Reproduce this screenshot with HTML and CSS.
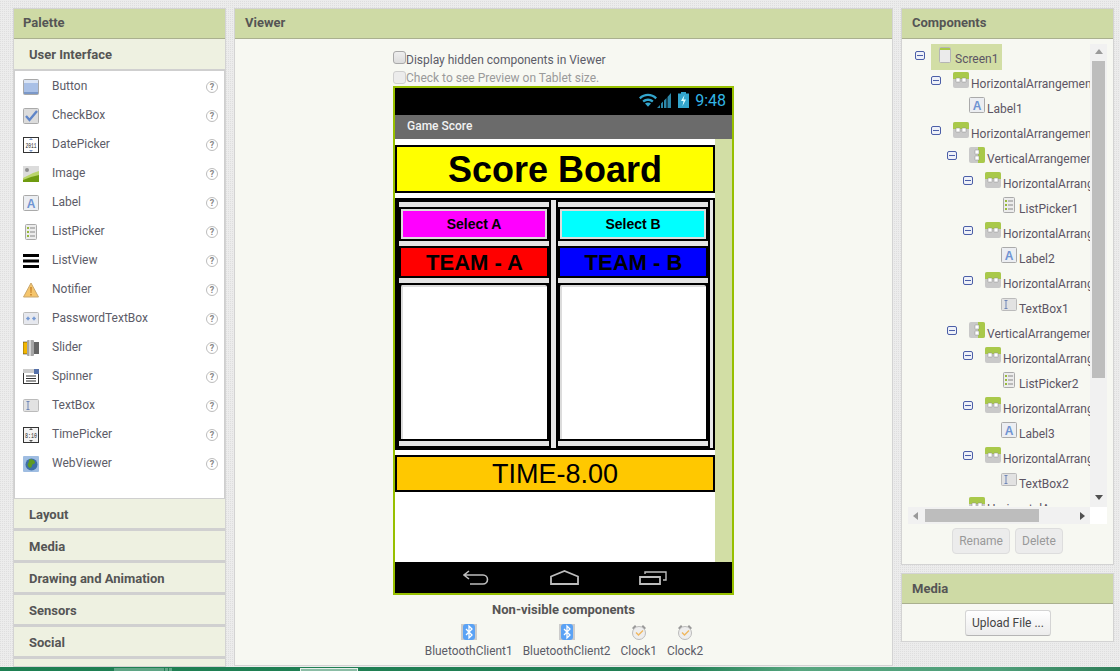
FILE: index.html
```html
<!DOCTYPE html>
<html lang="en">
<head>
<meta charset="utf-8">
<title>Game Score - Designer</title>
<link rel="stylesheet" href="styles.css">
</head>
<body>
<svg class="defs" width="0" height="0" aria-hidden="true">
  <defs>
    <symbol id="i-button" viewBox="0 0 16 16"><rect x=".5" y=".5" width="15" height="15" rx="1" fill="#a9c0e6" stroke="#a8a8a8"/><path d="M1 1h14v3H1z" fill="#dbe5f5"/><path d="M1 13h14v2H1z" fill="#7b98c8"/></symbol>
    <symbol id="i-check" viewBox="0 0 16 16"><rect x=".5" y=".5" width="15" height="15" rx="1" fill="#dcdcdc" stroke="#aaa"/><path d="M3 8l3.5 4L14 3" fill="none" stroke="#5f85c8" stroke-width="2.4"/></symbol>
    <symbol id="i-date" viewBox="0 0 16 16"><rect x=".5" y=".5" width="15" height="15" fill="#fff" stroke="#333"/><path d="M8 1l2 2H6zM8 15l2-2H6z" fill="#7b98c8"/><text x="8" y="11" font-size="8" textLength="11" lengthAdjust="spacingAndGlyphs" font-family="Liberation Mono" text-anchor="middle" fill="#222">2011</text></symbol>
    <symbol id="i-image" viewBox="0 0 16 16"><rect width="16" height="16" fill="#dcdcdc"/><circle cx="4" cy="4" r="2" fill="#8f8f8f"/><path d="M0 12L10 7l6-2v11H0z" fill="#b9d46a"/><path d="M0 14l8-3 8-2v7H0z" fill="#6f9b10"/></symbol>
    <symbol id="i-label" viewBox="0 0 16 16"><rect x=".5" y=".5" width="15" height="15" rx="1" fill="#eceef2" stroke="#aaa"/><text x="8" y="13" font-size="12" font-weight="700" font-family="Liberation Sans" text-anchor="middle" fill="#6f94d2">A</text></symbol>
    <symbol id="i-list" viewBox="0 0 16 16"><rect x="2.500" y=".5" width="11" height="15" rx="1" fill="#ececec" stroke="#aaa"/><path d="M4 3h2v2H4zM4 7h2v2H4zM4 11h2v2H4z" fill="#97b93c"/><path d="M7 4h5M7 8h5M7 12h5" stroke="#888"/></symbol>
    <symbol id="i-listview" viewBox="0 0 16 16"><path d="M0 1h16v3H0zM0 6.500h16v3H0zM0 12h16v3H0z" fill="#000"/></symbol>
    <symbol id="i-notifier" viewBox="0 0 16 16"><path d="M8 1l7.500 14H.5z" fill="#f5c56c" stroke="#c9a76e"/><path d="M7.200 5h1.600l-.3 6h-1zM7.200 12h1.600v1.500H7.200z" fill="#c9832b"/></symbol>
    <symbol id="i-pass" viewBox="0 0 16 16"><rect x=".5" y="1.500" width="15" height="12" rx="1" fill="#e6e8ee" stroke="#bbb"/><path d="M3 7.500h4M5 5.500v4M4 6l2 3M6 6L4 9M9 7.500h4M11 5.500v4M10 6l2 3M12 6l-2 3" stroke="#6f94d2" stroke-width=".8"/></symbol>
    <symbol id="i-slider" viewBox="0 0 16 16"><rect y="2" width="6" height="12" fill="#f2b600" stroke="#222" stroke-width=".5"/><rect x="10" y="2" width="6" height="12" fill="#666"/><rect x="4" y="0" width="7" height="16" rx="1" fill="#a6a6a6"/><path d="M6 0h2v16H6z" fill="#d4d4d4"/></symbol>
    <symbol id="i-spinner" viewBox="0 0 16 16"><rect x=".5" y=".5" width="15" height="14" fill="#fff" stroke="#333"/><path d="M0 0h16v4H0z" fill="#ccc"/><rect x="11" y="0" width="5" height="5" fill="#5570a8"/><path d="M3 7h10M3 9.500h10M3 12h10" stroke="#333"/></symbol>
    <symbol id="i-textbox" viewBox="0 0 16 16"><rect x=".5" y="1.500" width="15" height="12" rx="1" fill="#e2e2e2" stroke="#bbb"/><path d="M3.500 3.500h3M3.500 11.500h3M5 3.500v8" stroke="#6f86b8" fill="none"/></symbol>
    <symbol id="i-time" viewBox="0 0 16 16"><rect x=".5" y=".5" width="15" height="15" fill="#f4f4f4" stroke="#333"/><path d="M8 1l2 2H6zM8 15l2-2H6z" fill="#555"/><text x="8" y="11" font-size="8" textLength="12" lengthAdjust="spacingAndGlyphs" font-family="Liberation Mono" text-anchor="middle" fill="#222">8:10</text></symbol>
    <symbol id="i-web" viewBox="0 0 16 16"><rect width="16" height="16" rx="1" fill="#9fbde2"/><circle cx="8.500" cy="8.500" r="6" fill="#3d6ea8"/><path d="M6 3.500c3-1 6 1 6 3s-3 1-3 3-2 3-3 2-2-3-1-4 1-3 1-4z" fill="#5d9a22"/></symbol>
    <symbol id="i-ha" viewBox="0 0 16 16"><rect width="16" height="16" rx="2" fill="#c9c9c9"/><path d="M0 7V2a2 2 0 0 1 2-2h12a2 2 0 0 1 2 2v5z" fill="#a9c94a"/><rect x="3" y="6" width="4" height="4" rx=".5" fill="#fff" stroke="#888" stroke-width=".5"/><rect x="9" y="6" width="4" height="4" rx=".5" fill="#fff" stroke="#888" stroke-width=".5"/></symbol>
    <symbol id="i-va" viewBox="0 0 16 16"><rect width="16" height="16" rx="2" fill="#c9c9c9"/><path d="M9 0h5a2 2 0 0 1 2 2v12a2 2 0 0 1-2 2H9z" fill="#a9c94a"/><rect x="6" y="3" width="4" height="4" rx=".5" fill="#fff" stroke="#888" stroke-width=".5"/><rect x="6" y="9" width="4" height="4" rx=".5" fill="#fff" stroke="#888" stroke-width=".5"/></symbol>
    <symbol id="i-screen" viewBox="0 0 16 16"><rect x="2.500" y=".5" width="11" height="15" rx="1" fill="#ebebeb" stroke="#b5b5b5"/><path d="M3 1h10v2H3z" fill="#a9c94a"/></symbol>
    <symbol id="i-bt" viewBox="0 0 16 16"><rect width="16" height="16" fill="#ccc"/><rect x="2" width="12" height="16" rx="3" fill="#5aa2f5"/><path d="M5 5l6 6-3 3V2l3 3-6 6" fill="none" stroke="#fff" stroke-width="1.300"/></symbol>
    <symbol id="i-clock" viewBox="0 0 16 16"><path d="M1 4l3-3 1.500 1.500-3 3zM15 4l-3-3-1.500 1.500 3 3z" fill="#999"/><circle cx="8" cy="9" r="6.500" fill="#eee" stroke="#bbb"/><path d="M5 8.500l2.500 2.500L12 6.500" fill="none" stroke="#f0b860" stroke-width="1.400"/></symbol>
  </defs>
</svg>

<main class="workspace">
  <section class="panel palette">
    <h2 class="panel-head">Palette</h2>
    <h3 class="drawer open">User Interface</h3>
    <ul class="palette-list">
      <li class="pal-row"><svg class="ic"><use href="#i-button"/></svg><span class="pal-name">Button</span><span class="help">?</span></li>
      <li class="pal-row"><svg class="ic"><use href="#i-check"/></svg><span class="pal-name">CheckBox</span><span class="help">?</span></li>
      <li class="pal-row"><svg class="ic"><use href="#i-date"/></svg><span class="pal-name">DatePicker</span><span class="help">?</span></li>
      <li class="pal-row"><svg class="ic"><use href="#i-image"/></svg><span class="pal-name">Image</span><span class="help">?</span></li>
      <li class="pal-row"><svg class="ic"><use href="#i-label"/></svg><span class="pal-name">Label</span><span class="help">?</span></li>
      <li class="pal-row"><svg class="ic"><use href="#i-list"/></svg><span class="pal-name">ListPicker</span><span class="help">?</span></li>
      <li class="pal-row"><svg class="ic"><use href="#i-listview"/></svg><span class="pal-name">ListView</span><span class="help">?</span></li>
      <li class="pal-row"><svg class="ic"><use href="#i-notifier"/></svg><span class="pal-name">Notifier</span><span class="help">?</span></li>
      <li class="pal-row"><svg class="ic"><use href="#i-pass"/></svg><span class="pal-name">PasswordTextBox</span><span class="help">?</span></li>
      <li class="pal-row"><svg class="ic"><use href="#i-slider"/></svg><span class="pal-name">Slider</span><span class="help">?</span></li>
      <li class="pal-row"><svg class="ic"><use href="#i-spinner"/></svg><span class="pal-name">Spinner</span><span class="help">?</span></li>
      <li class="pal-row"><svg class="ic"><use href="#i-textbox"/></svg><span class="pal-name">TextBox</span><span class="help">?</span></li>
      <li class="pal-row"><svg class="ic"><use href="#i-time"/></svg><span class="pal-name">TimePicker</span><span class="help">?</span></li>
      <li class="pal-row"><svg class="ic"><use href="#i-web"/></svg><span class="pal-name">WebViewer</span><span class="help">?</span></li>
    </ul>
    <h3 class="drawer">Layout</h3>
    <h3 class="drawer">Media</h3>
    <h3 class="drawer">Drawing and Animation</h3>
    <h3 class="drawer">Sensors</h3>
    <h3 class="drawer">Social</h3>
    <h3 class="drawer"></h3>
  </section>

  <section class="panel viewer">
    <h2 class="panel-head">Viewer</h2>
    <div class="viewer-body">
      <label class="opt opt-first"><input class="box" type="checkbox">Display hidden components in Viewer</label>
      <label class="opt opt-off"><input class="box" type="checkbox" disabled>Check to see Preview on Tablet size.</label>
      <div class="phone">
        <div class="status">
          <svg class="st-wifi" viewBox="0 0 18 14"><path d="M0 4.500C5-.5 13-.5 18 4.500l-1.600 1.700C12 2 6 2 1.600 6.200z" fill="#33a5cc"/><path d="M3.400 7.800c3.200-3 8-3 11.200 0L13 9.400c-2.300-2-5.700-2-8 0z" fill="#33a5cc"/><path d="M6 10.600c1.800-1.400 4.200-1.400 6 0L9 13.800z" fill="#33a5cc"/></svg>
          <svg class="st-signal" viewBox="0 0 14 15"><path d="M0 15l3-3v3zM4 15V10.500l2-2V15zM7 15V7.500l2.500-2.500V15zM10.500 15V4L14 0v15z" fill="#2c87a8"/></svg>
          <svg class="st-batt" viewBox="0 0 11 16"><path d="M3 0h5v1.500h3V16H0V1.500h3z" fill="#33a5cc"/><path d="M6.500 3L3 9h2.500L4.500 14 8 7.500H5.500z" fill="#dff"/></svg>
          <span class="st-time">9:48</span>
        </div>
        <div class="titlebar">Game Score</div>
        <div class="screen">
          <div class="canvas">
            <div class="scorebar">Score Board</div>
            <div class="board">
              <div class="team">
                <div class="strip"></div>
                <div class="pick pick-a"><span class="pick-in">Select A</span></div>
                <div class="strip"></div>
                <div class="name name-a">TEAM - A</div>
                <div class="strip"></div>
                <div class="scorebox"></div>
                <div class="strip"></div>
              </div>
              <div class="vstrip"></div>
              <div class="team">
                <div class="strip"></div>
                <div class="pick pick-b"><span class="pick-in">Select B</span></div>
                <div class="strip"></div>
                <div class="name name-b">TEAM - B</div>
                <div class="strip"></div>
                <div class="scorebox"></div>
                <div class="strip"></div>
              </div>
              <div class="vstrip vstrip-end"></div>
            </div>
            <div class="timebar">TIME-8.00</div>
          </div>
          <div class="screen-side"></div>
        </div>
        <div class="navbar">
          <svg class="nav-back" viewBox="0 0 26 15"><path d="M6 1L1 5l5 4M1 5h19a4.500 4.500 0 0 1 0 9H7" fill="none" stroke="#bdbdbd" stroke-width="1.600"/></svg>
          <svg class="nav-home" viewBox="0 0 29 15"><path d="M1 6.500L14.500 1 28 6.500V14H1z" fill="none" stroke="#bdbdbd" stroke-width="1.800"/></svg>
          <svg class="nav-recent" viewBox="0 0 28 15"><path d="M1 7h20v7H1z" fill="none" stroke="#bdbdbd" stroke-width="1.800"/><path d="M6 4V2h21v8h-3" fill="none" stroke="#bdbdbd" stroke-width="1.400"/></svg>
        </div>
      </div>
      <h4 class="nv-title">Non-visible components</h4>
      <div class="nv-row">
        <div class="nv-item"><svg class="ic"><use href="#i-bt"/></svg><span>BluetoothClient1</span></div>
        <div class="nv-item"><svg class="ic"><use href="#i-bt"/></svg><span>BluetoothClient2</span></div>
        <div class="nv-item"><svg class="ic"><use href="#i-clock"/></svg><span>Clock1</span></div>
        <div class="nv-item"><svg class="ic"><use href="#i-clock"/></svg><span>Clock2</span></div>
      </div>
    </div>
  </section>

  <div class="right-col">
    <section class="panel components">
      <h2 class="panel-head">Components</h2>
      <div class="tree-frame">
        <div class="tree-top">
          <div class="tree">
            <div class="node l0"><span class="tg tg-root"><i class="minus"></i></span><span class="selected"><svg class="ic"><use href="#i-screen"/></svg><span class="nm">Screen1</span></span></div>
            <div class="node l1"><span class="tg"><i class="minus"></i></span><svg class="ic"><use href="#i-ha"/></svg><span class="nm">HorizontalArrangement1</span></div>
            <div class="node l2"><span class="tg"></span><svg class="ic"><use href="#i-label"/></svg><span class="nm">Label1</span></div>
            <div class="node l1"><span class="tg"><i class="minus"></i></span><svg class="ic"><use href="#i-ha"/></svg><span class="nm">HorizontalArrangement2</span></div>
            <div class="node l2"><span class="tg"><i class="minus"></i></span><svg class="ic"><use href="#i-va"/></svg><span class="nm">VerticalArrangement1</span></div>
            <div class="node l3"><span class="tg"><i class="minus"></i></span><svg class="ic"><use href="#i-ha"/></svg><span class="nm">HorizontalArrangement3</span></div>
            <div class="node l4"><span class="tg"></span><svg class="ic"><use href="#i-list"/></svg><span class="nm">ListPicker1</span></div>
            <div class="node l3"><span class="tg"><i class="minus"></i></span><svg class="ic"><use href="#i-ha"/></svg><span class="nm">HorizontalArrangement4</span></div>
            <div class="node l4"><span class="tg"></span><svg class="ic"><use href="#i-label"/></svg><span class="nm">Label2</span></div>
            <div class="node l3"><span class="tg"><i class="minus"></i></span><svg class="ic"><use href="#i-ha"/></svg><span class="nm">HorizontalArrangement5</span></div>
            <div class="node l4"><span class="tg"></span><svg class="ic"><use href="#i-textbox"/></svg><span class="nm">TextBox1</span></div>
            <div class="node l2"><span class="tg"><i class="minus"></i></span><svg class="ic"><use href="#i-va"/></svg><span class="nm">VerticalArrangement2</span></div>
            <div class="node l3"><span class="tg"><i class="minus"></i></span><svg class="ic"><use href="#i-ha"/></svg><span class="nm">HorizontalArrangement6</span></div>
            <div class="node l4"><span class="tg"></span><svg class="ic"><use href="#i-list"/></svg><span class="nm">ListPicker2</span></div>
            <div class="node l3"><span class="tg"><i class="minus"></i></span><svg class="ic"><use href="#i-ha"/></svg><span class="nm">HorizontalArrangement7</span></div>
            <div class="node l4"><span class="tg"></span><svg class="ic"><use href="#i-label"/></svg><span class="nm">Label3</span></div>
            <div class="node l3"><span class="tg"><i class="minus"></i></span><svg class="ic"><use href="#i-ha"/></svg><span class="nm">HorizontalArrangement8</span></div>
            <div class="node l4"><span class="tg"></span><svg class="ic"><use href="#i-textbox"/></svg><span class="nm">TextBox2</span></div>
            <div class="node l2"><span class="tg"></span><svg class="ic"><use href="#i-ha"/></svg><span class="nm">HorizontalArrangement9</span></div>
          </div>
          <div class="vbar">
            <span class="arrow arrow-up"></span>
            <span class="vthumb"></span>
            <span class="arrow arrow-down"></span>
          </div>
        </div>
        <div class="hbar-row">
          <div class="hbar">
            <span class="arrow arrow-left"></span>
            <span class="hthumb"></span>
            <span class="arrow arrow-right"></span>
          </div>
          <div class="corner"></div>
        </div>
      </div>
      <div class="comp-actions">
        <button class="btn-off" type="button">Rename</button>
        <button class="btn-off" type="button">Delete</button>
      </div>
    </section>
    <section class="panel media">
      <h2 class="panel-head">Media</h2>
      <div class="media-body"><button class="btn-up" type="button">Upload File ...</button></div>
    </section>
  </div>
</main>
<footer class="taskbar">
  <span class="task task-a"></span>
  <span class="task task-b"></span>
</footer>
</body>
</html>
```

FILE: styles.css
```css
* { box-sizing: border-box; }
html, body { margin: 0; padding: 0; }
body {
  width: 1120px;
  height: 671px;
  overflow: hidden;
  font-family: Roboto, "Liberation Sans", sans-serif;
  color: #5a5a5a;
  background-color: #ececec;
  background-image: linear-gradient(45deg, #dedede 25%, transparent 25%, transparent 75%, #dedede 75%);
  background-size: 2px 2px;
}
.defs { position: absolute; }
.ic { width: 16px; height: 16px; flex: none; display: block; }

.workspace {
  display: flex;
  gap: 8px;
  height: 667px;
  padding: 8px 0 0 13px;
}
.panel { border: 1px solid #d3d3d3; background: #f7f8f2; }
.panel-head {
  margin: 0;
  height: 30px;
  padding-left: 10px;
  font-size: 13px;
  font-weight: 700;
  line-height: 27px;
  color: #555;
  background: #cedaa5;
  border-bottom: 1px solid #aab08f;
}
.palette .panel-head { padding-left: 9px; }
.media .panel-head { line-height: 29px; }

/* Palette */
.palette { width: 213px; height: 659px; overflow: hidden; background: #eef1e1; }
.drawer {
  margin: 0;
  height: 32px;
  padding-left: 15px;
  font-size: 13px;
  font-weight: 700;
  line-height: 31px;
  color: #555;
  background: #eef1e1;
  border-bottom: 3px solid #d0d0d0;
}
.drawer.open { height: 31px; border-bottom-width: 1px; line-height: 31px; }
.palette-list {
  list-style: none;
  margin: 0;
  height: 429px;
  padding: 1px 0 0 8px;
  background: #fff;
  border: 1px solid #cfcfcf;
}
.pal-row { display: flex; align-items: center; height: 29px; font-size: 12px; color: #5c5c68; }
.pal-name { margin: 0 0 2px 13px; flex: 1; }
.help {
  width: 12px;
  height: 12px;
  margin-right: 6px;
  border: 1px solid #bdbdbd;
  border-radius: 50%;
  font-size: 9px;
  font-weight: 700;
  line-height: 10px;
  text-align: center;
  color: #888;
}

/* Viewer */
.viewer { width: 659px; height: 658px; }
.viewer-body { width: 341px; margin: 0 auto; }
.opt { display: flex; font-size: 12px; color: #5c5c68; }
.opt-first { height: 20px; margin-top: 11px; line-height: 20px; }
.opt-off { height: 16px; line-height: 17px; color: #9a9a9a; }
.box {
  appearance: none;
  width: 13px;
  height: 13px;
  margin: 1px 0 0;
  border: 1px solid #a9a9a9;
  border-radius: 3px;
  background: linear-gradient(#eee, #ddd);
}
.box:disabled { border-color: #cfcfcf; background: #ececec; }

.phone { width: 341px; height: 509px; border: 2px solid #97c000; background: #000; }
.status { display: flex; align-items: center; justify-content: flex-end; height: 27px; padding: 0 6px 3px 0; background: #000; }
.st-wifi { width: 18px; height: 14px; }
.st-signal { width: 14px; height: 15px; }
.st-batt { width: 11px; height: 16px; margin-left: 7px; }
.st-time { margin-left: 6px; font-size: 16px; color: #33b5e5; }
.titlebar { height: 24px; padding-left: 12px; line-height: 23px; font-size: 12px; font-weight: 500; color: #f2f2f2; background: #6b6b6b; }
.screen { display: flex; height: 423px; }
.canvas { width: 320px; padding-top: 6px; background: #fff; font-family: "Liberation Sans", Arial, sans-serif; color: #000; }
.screen-side { flex: 1; background: #d2dea5; }
.scorebar {
  height: 48px;
  border: 2px solid #000;
  background: #ff0;
  font-size: 36px;
  font-weight: 700;
  line-height: 46px;
  text-align: center;
}
.board {
  display: flex;
  gap: 2px;
  height: 252px;
  margin-top: 5px;
  padding: 2px 2px 2px 4px;
  background: #000;
}
.team { display: flex; flex-direction: column; gap: 2px; width: 150px; padding-top: 2px; }
.strip { flex: none; height: 5px; background: #e4e4e4; }
.vstrip { width: 5px; background: #e8e8e8; }
.vstrip-end { width: 3px; }
.pick, .name, .scorebox { margin: 0 2px; }
.pick { height: 30px; padding: 2px; background: #dcdcdc; }
.pick-in {
  display: block;
  height: 26px;
  font-size: 14px;
  font-weight: 700;
  line-height: 26px;
  text-align: center;
}
.pick-a .pick-in { background: #f0f; }
.pick-b .pick-in { background: #0ff; }
.name { height: 28px; padding-left: 1px; font-size: 22px; font-weight: 700; line-height: 30px; text-align: center; }
.name-a { background: #f00; }
.name-b { background: #00f; }
.scorebox {
  height: 154px;
  background: #fff;
  border-top: 2px solid #dcdcdc;
  border-left: 2px solid #dcdcdc;
  border-radius: 2px 2px 0 0;
}
.timebar {
  height: 37px;
  margin-top: 5px;
  border: 2px solid #000;
  background: #ffc800;
  font-size: 27px;
  line-height: 35px;
  text-align: center;
}
.navbar { display: flex; align-items: center; height: 31px; padding-left: 68px; background: #000; }
.nav-back { width: 26px; height: 15px; }
.nav-home { width: 29px; height: 15px; margin-left: 61px; }
.nav-recent { width: 28px; height: 15px; margin-left: 60px; }

.nv-title { margin: 7px 0 0; font-size: 13px; font-weight: 700; line-height: 16px; text-align: center; color: #555; }
.nv-row { display: flex; justify-content: center; gap: 10px; margin-top: 6px; padding-left: 1px; }
.nv-item { display: flex; flex-direction: column; align-items: center; gap: 3px; font-size: 11.900px; line-height: 16px; color: #5c5c68; }

/* Components */
.right-col { display: flex; flex-direction: column; gap: 8px; width: 213px; }
.components { height: 557px; }
.tree-frame { margin: 5px 6px 0; }
.tree-top { display: flex; height: 463px; }
.tree { width: 183px; height: 462px; padding-top: 2px; overflow: hidden; }
.node { display: flex; height: 25px; white-space: nowrap; font-size: 12px; color: #5c5564; }
.node .ic { margin-top: 1px; }
.nm { margin: 1px 0 0 2px; line-height: 25px; }
.l0 { padding-left: 7px; }
.l1 { padding-left: 23px; }
.l2 { padding-left: 39px; }
.l3 { padding-left: 55px; }
.l4 { padding-left: 71px; }
.tg { width: 22px; flex: none; }
.tg-root { width: 16px; }
.minus {
  display: block;
  width: 10px;
  height: 9px;
  margin-top: 5px;
  border: 1px solid #4c5fa8;
  border-radius: 2px;
  background: linear-gradient(#4c5fa8, #4c5fa8) center / 6px 1px no-repeat #eef1f8;
}
.selected {
  display: flex;
  width: 71px;
  height: 26px;
  margin-top: -2px;
  padding-left: 6px;
  background: #d2dea5;
}
.selected .ic { margin-top: 3px; }
.selected .nm { margin-top: 3px; }

.vbar { display: flex; flex-direction: column; align-items: center; width: 17px; background: #f1f1f1; }
.vthumb { width: 13px; height: 317px; background: #bdbdbd; }
.arrow { flex: none; width: 0; height: 0; border: 4px solid transparent; }
.arrow-up { margin: 5px 0 7px; border-top: 0; border-bottom: 5px solid #9a9a9a; }
.arrow-down { margin-top: 117px; border-bottom: 0; border-top: 5px solid #505050; }
.hbar-row { display: flex; height: 17px; }
.hbar { display: flex; align-items: center; width: 183px; background: #f1f1f1; }
.corner { width: 17px; background: #fff; }
.hthumb { width: 114px; height: 13px; margin-left: 7px; background: #bdbdbd; }
.arrow-left { margin-left: 5px; border-left: 0; border-right: 5px solid #9a9a9a; }
.arrow-right { margin-left: 41px; border-right: 0; border-left: 5px solid #505050; }
.comp-actions { display: flex; justify-content: center; gap: 5px; margin-top: 4px; }
.btn-off {
  height: 26px;
  padding: 0 6px;
  border: 1px solid #ddd;
  border-radius: 4px;
  background: #ececec;
  font: 12px Roboto, sans-serif;
  color: #999;
}
.media { height: 69px; }
.media-body { display: flex; justify-content: center; padding: 6px 0 0 1px; }
.btn-up {
  height: 26px;
  padding: 0 6px;
  border: 1px solid #d4d4d4;
  border-bottom-color: #b5b5b5;
  border-radius: 3px;
  background: linear-gradient(#fff, #ececec);
  font: 12px Roboto, sans-serif;
  color: #444;
}

/* Desktop strip */
.taskbar {
  display: flex;
  height: 4px;
  padding: 1px 0 0 114px;
  background: linear-gradient(90deg, #1e7f52 0, #227f55 680px, #58a680 800px, #4f9e79 1000px, #2f7d58 1120px);
}
.task { display: block; height: 3px; }
.task-a {
  width: 58px;
  background: linear-gradient(90deg, #5fa585 50px, #227f55 50px, #227f55 51px, #5fa585 51px, #5fa585 54px, #227f55 54px, #227f55 55px, #5fa585 55px);
}
.task-b { width: 58px; margin-left: 128px; background: #8cbda6; border: 1px solid #e4efe9; border-bottom: 0; }
```
